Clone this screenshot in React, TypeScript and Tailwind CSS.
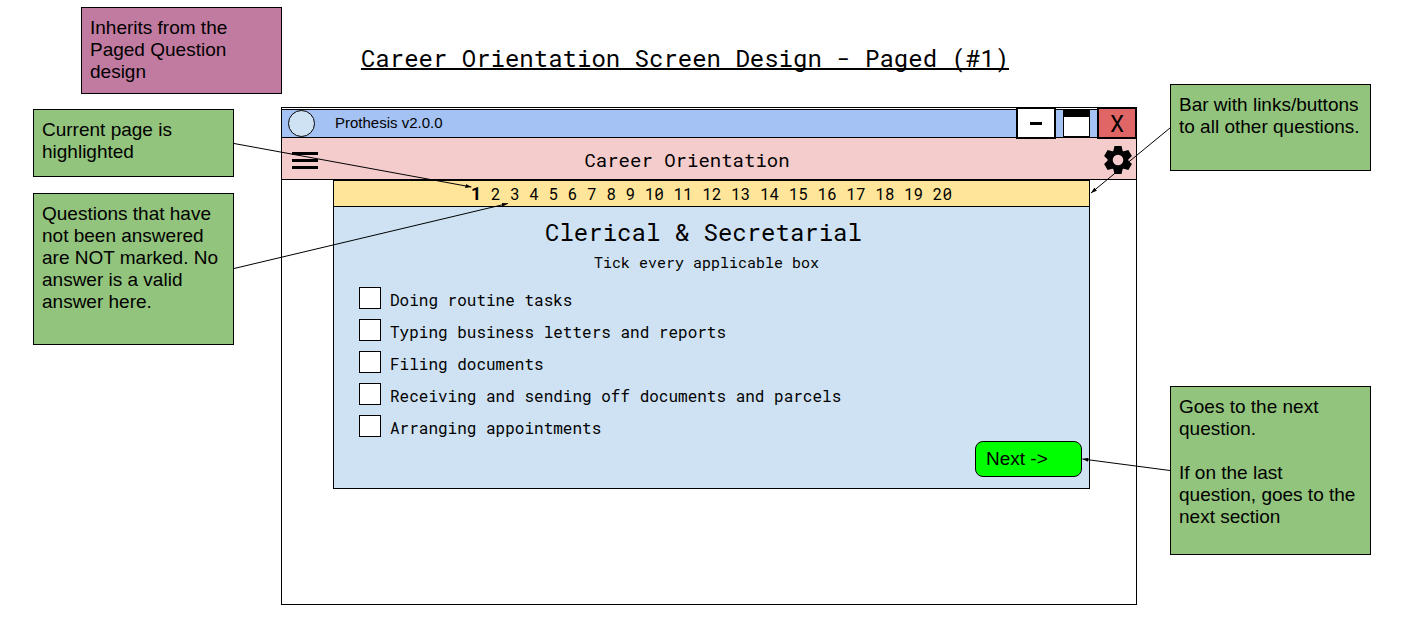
import type { ReactNode } from "react";

const tasks = [
  "Doing routine tasks",
  "Typing business letters and reports",
  "Filing documents",
  "Receiving and sending off documents and parcels",
  "Arranging appointments",
];

const pages = Array.from({ length: 19 }, (_, i) => i + 2);

const teeth = [0, 60, 120, 180, 240, 300];

const mono = "font-['Roboto_Mono','Liberation_Mono',monospace]";

function Note({ className, children }: { className: string; children: ReactNode }) {
  return (
    <aside className={`border border-black px-2 pt-[9px] pb-2 text-[19px] leading-[22px] ${className}`}>
      {children}
    </aside>
  );
}

function Arrow({ x1, y1, x2, y2 }: { x1: string; y1: number; x2: string; y2: number }) {
  return <line x1={x1} y1={y1} x2={x2} y2={y2} stroke="black" strokeWidth="1" markerEnd="url(#head)" />;
}

function Connectors() {
  return (
    <svg className="pointer-events-none absolute inset-0 size-full" aria-hidden="true">
      <defs>
        <marker id="head" viewBox="0 0 6 4" refX="6" refY="2" markerWidth="6" markerHeight="4" markerUnits="userSpaceOnUse" orient="auto">
          <path d="M0 0 L6 2 L0 4 Z" />
        </marker>
      </defs>
      <Arrow x1="16.68%" y1={143.5} x2="33.6%" y2={187} />
      <Arrow x1="16.68%" y1={268.5} x2="36.2%" y2={203.5} />
      <Arrow x1="83.39%" y1={128} x2="77.76%" y2={193} />
      <Arrow x1="83.39%" y1={470.5} x2="77.15%" y2={459} />
    </svg>
  );
}

function Gear() {
  return (
    <svg className="size-7" viewBox="-14 -14 28 28" aria-hidden="true">
      <circle r="7.8" fill="none" stroke="black" strokeWidth="5" />
      {teeth.map((angle) => (
        <path key={angle} d="M-3.5 -14 L3.5 -14 L4.8 -8.5 L-4.8 -8.5 Z" transform={`rotate(${angle})`} />
      ))}
    </svg>
  );
}

function TitleBar() {
  return (
    <div className="mt-px flex h-[29px] items-center border-y border-black bg-[#a4c2f4]">
      <span className="ml-1.5 size-[27px] shrink-0 rounded-full border border-black bg-[#cfe2f3]" />
      <span className="ml-5 flex-1 text-[15px]">Prothesis v2.0.0</span>
      <div className="-mt-[3px] -mr-px flex items-center gap-[7px] self-start">
        <button aria-label="Minimise" className="flex h-8 w-10 items-center justify-center border-2 border-black bg-white">
          <span className="h-[3px] w-3 bg-black" />
        </button>
        <button aria-label="Maximise" className="h-[27px] w-[27px] border border-t-[7px] border-black bg-white" />
        <button aria-label="Close" className={`h-8 w-10 border-2 border-black bg-[#e06666] text-[24px] leading-7 ${mono}`}>
          X
        </button>
      </div>
    </div>
  );
}

function AppHeader() {
  return (
    <header className="flex h-[42px] items-center border-b border-black bg-[#f4cccc] pt-[3px]">
      <button aria-label="Menu" className="ml-2.5 flex w-[26px] flex-col gap-1">
        <span className="h-[3px] bg-black" />
        <span className="h-[3px] bg-black" />
        <span className="h-[3px] bg-black" />
      </button>
      <h2 className={`flex-1 pr-12 text-center text-[19px] ${mono}`}>Career Orientation</h2>
      <button aria-label="Settings" className="mr-1">
        <Gear />
      </button>
    </header>
  );
}

function QuestionPanel() {
  return (
    <main className="mr-[46px] ml-[51px] border border-black bg-[#cfe2f3]">
      <nav aria-label="Questions" className={`h-[26px] border-b border-black bg-[#ffe599] text-center text-[16px] leading-[26px] ${mono}`}>
        <a href="#1" aria-current="page" className="font-['Roboto',sans-serif] text-[18px] font-bold">
          1
        </a>
        {pages.map((n) => (
          <span key={n}>
            {" "}
            <a href={`#${n}`}>{n}</a>
          </span>
        ))}
      </nav>
      <div className={`pt-[9px] text-center ${mono}`}>
        <h3 className="pr-4 text-[24px] leading-8">Clerical &amp; Secretarial</h3>
        <p className="mt-1 pr-[10px] text-[15px] leading-5">Tick every applicable box</p>
      </div>
      <ul className={`mt-[15px] ml-[25px] flex flex-col gap-[10px] text-[16px] leading-[22px] ${mono}`}>
        {tasks.map((task) => (
          <li key={task}>
            <label className="flex items-start gap-[9px]">
              <input type="checkbox" className="size-[22px] shrink-0 appearance-none border border-black bg-white checked:bg-black" />
              <span className="-mb-0.5 pt-0.5">{task}</span>
            </label>
          </li>
        ))}
      </ul>
      <div className="mt-1 mr-[7px] mb-[11px] flex justify-end">
        <button className="h-9 w-[107px] rounded-lg border border-black bg-[#00ff00] px-2.5 text-left text-[19px]">
          Next -&gt;
        </button>
      </div>
    </main>
  );
}

export default function App() {
  return (
    <div className="relative min-h-screen bg-white font-['Liberation_Sans',Arial,sans-serif] text-black">
      <div className="grid grid-cols-[33fr_201fr_47fr_856fr_33fr_201fr_32fr] items-start">
        <div className="col-start-2 flex flex-col pt-[7px]">
          <Note className="-mr-12 ml-12 min-h-[87px] bg-[#c27ba0]">Inherits from the Paged Question design</Note>
          <Note className="mt-[15px] min-h-[68px] bg-[#93c47d]">Current page is highlighted</Note>
          <Note className="mt-4 min-h-[152px] bg-[#93c47d]">
            Questions that have not been answered are NOT marked. No answer is a valid answer here.
          </Note>
        </div>
        <div className="col-start-4 pb-6">
          <h1 className={`pt-[42px] pr-12 pb-[33px] text-center text-[24px] leading-8 underline decoration-2 underline-offset-1 [text-decoration-skip-ink:none] ${mono}`}>
            Career Orientation Screen Design - Paged (#1)
          </h1>
          <section className="border border-black pb-[115px]">
            <TitleBar />
            <AppHeader />
            <QuestionPanel />
          </section>
        </div>
        <div className="col-start-6 flex flex-col pt-[84px]">
          <Note className="min-h-[87px] bg-[#93c47d]">Bar with links/buttons to all other questions.</Note>
          <Note className="mt-[215px] min-h-[169px] bg-[#93c47d]">
            <p>Goes to the next question.</p>
            <p className="mt-[22px]">If on the last question, goes to the next section</p>
          </Note>
        </div>
      </div>
      <Connectors />
    </div>
  );
}
